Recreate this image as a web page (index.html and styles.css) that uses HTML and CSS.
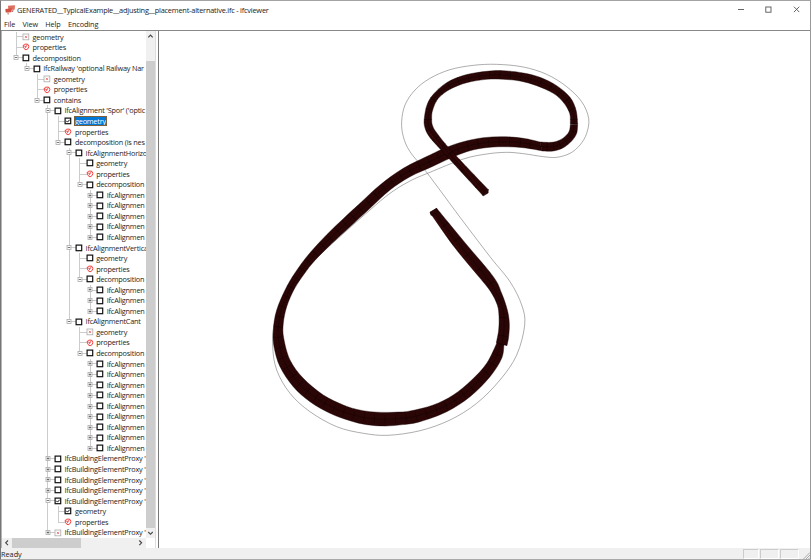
FILE: index.html
```html
<!DOCTYPE html>
<html lang="en">
<head>
<meta charset="utf-8">
<title>ifcviewer</title>
<link rel="stylesheet" href="styles.css">
</head>
<body>
<div class="window">
  <header class="titlebar">
    <svg class="logo" width="12" height="10" viewBox="0 0 12 10"><path d="M3 .8 10 .2 9.6 4.8 3.4 5z" fill="#dc6f60"/><path d="M.3 4 6.8 3.3 6.5 7.2.7 7.5z" fill="#d64f40"/><path d="M3 7.5 3.2 9.5M8 5 7.5 7" stroke="#bd6256"/></svg>
    <span class="title">GENERATED__TypicalExample__adjusting__placement-alternative.ifc - ifcviewer</span>
    <svg class="controls" width="64" height="10" viewBox="0 0 64 10" fill="none" stroke="#555" stroke-width=".9"><path d="M1 4.5h6M56.9 1.7l5.4 5.4M62.3 1.7l-5.4 5.4"/><rect x="28.8" y="2" width="5.2" height="5.2"/></svg>
  </header>
  <nav class="menu"><span>File</span><span>View</span><span>Help</span><span>Encoding</span></nav>
  <main class="content">
    <section class="panel">
      <div class="upper">
        <div class="treebox"><ul class="tree" id="tree"></ul></div>
        <div class="vscroll">
          <svg width="9" height="10" viewBox="0 0 9 10"><path d="M2.3 6.3 4.5 4l2.2 2.3"/></svg>
          <div class="vthumb"></div>
          <svg width="9" height="10" viewBox="0 0 9 10"><path d="M2.3 4 4.5 6.3 6.7 4"/></svg>
        </div>
      </div>
      <div class="hscroll">
        <svg width="10" height="10" viewBox="0 0 10 10"><path d="M6 2.5 3.7 4.8 6 7.1"/></svg>
        <div class="hthumb"></div>
        <svg width="10" height="10" viewBox="0 0 10 10"><path d="M3.3 2.5 5.6 4.8 3.3 7.1"/></svg>
      </div>
    </section>
    <section class="viewport">
      <svg id="scene" width="651" height="517" viewBox="159 31 651 517"></svg>
    </section>
  </main>
  <footer class="status"><span class="ready">Ready</span><i class="pane"></i><i class="pane wide"></i><i class="pane wide"></i>
    <svg class="grip" width="10" height="11" viewBox="0 0 10 11" stroke="#aaa"><path d="M3.5 11 10 4.5M6 11l4-4M8.5 11 10 9.5"/></svg>
  </footer>
</div>
<script src="script.js"></script>
</body>
</html>
```
FILE: styles.css
```css
* { box-sizing: border-box; }
body { margin: 0; font-family: "Open Sans", "Noto Sans", sans-serif; font-size: 7.3px; letter-spacing: -.2px; color: #1c1c1c; overflow: hidden; }
.window { width: 811px; height: 560px; display: flex; flex-direction: column; background: #fff; border-top: 1px solid #a3a3a3; border-left: 1px solid #777; border-right: 1px solid #999; border-bottom: 1px solid #aaa; }
.titlebar { height: 17px; display: flex; align-items: center; padding: 0 9px 0 4px; }
.logo { flex: none; }
.title { white-space: nowrap; font-size: 7.4px; letter-spacing: -.22px; line-height: 12px; }
.controls { margin-left: auto; }
.menu { height: 12px; display: flex; gap: 7.3px; padding-left: 3px; line-height: 12px; letter-spacing: -.1px; }
.content { height: 518px; display: flex; border-top: 1px solid #888; }
.panel { width: 155px; border-left: 1px solid #b5b5b5; border-right: 1px solid #ddd; display: flex; flex-direction: column; }
.upper { height: 507px; display: flex; }
.treebox { width: 144px; overflow: hidden; }
.vscroll { width: 9px; background: #f0f0f0; display: flex; flex-direction: column; }
.vscroll svg, .hscroll svg { flex: none; fill: none; stroke: #444; stroke-width: 1.1; }
.vthumb { margin-top: 20px; height: 467px; background: #cdcdcd; }
.hscroll { height: 10px; width: 144px; background: #f0f0f0; display: flex; }
.hthumb { width: 69px; height: 10px; background: #cdcdcd; }
.hscroll svg:last-child { margin-left: auto; }
.viewport { flex: 1; margin-left: 2px; border-left: 1px solid #777; overflow: hidden; }
#scene { display: block; }
.status { height: 11px; flex: none; display: flex; background: #f0f0f0; line-height: 12px; letter-spacing: 0; }
.ready { flex: 1; }
.pane { width: 16px; margin: 1px 1px 0 0; border: 1px solid #ccc; border-bottom-color: #fff; border-right-color: #fff; }
.pane.wide { width: 19px; }
.grip { fill: none; }

.tree, .tree ul { list-style: none; margin: 0; padding: 0; }
.tree { padding: .6px 0 0 9px; width: 144px; }
.tree ul { padding-left: 10.6px; }
.tree li { position: relative; }
.tree li::before { content: ""; position: absolute; left: 4.6px; top: 0; bottom: 0; border-left: 1px solid #ccc; }
.tree li:last-child::before { bottom: auto; height: 5.3px; }
.row { height: 10.555px; display: flex; align-items: center; position: relative; white-space: nowrap; }
.row::before { content: ""; position: absolute; left: 5px; top: 4.8px; width: 7px; border-top: 1px solid #ccc; }
.row svg { flex: none; position: relative; }
.label { line-height: 10.5px; padding: 0 1px; margin-left: 1.6px; }
.selected { background: #0078d7; color: #fff; outline: 1px solid #7b603c; outline-offset: -1px; }

.track { fill: #2a0606; stroke: #160303; stroke-width: .4; }
.joint { fill: none; stroke: #090000; stroke-width: .5; opacity: .6; }
.shade { fill: none; stroke: #570b0b; stroke-width: .6; }
.axis { fill: none; stroke: #777; stroke-width: .6; }
```
FILE: script.js
```js
// Tree: [label, icon, children | "+"]
const leaf = n => Array.from({ length: n }, () => ["IfcAlignmen", "box", "+"]);
const props = ["properties", "prop"];
const proxy = ["IfcBuildingElementProxy '", "box", "+"];
const data = [
  ["geometry", "none"], props,
  ["decomposition", "box", [
    ["IfcRailway 'optional Railway Nar", "box", [
      ["geometry", "none"], props,
      ["contains", "box", [
        ["IfcAlignment 'Spor' ('optic", "box", [
          ["geometry", "check", null, true], props,
          ["decomposition (is nes", "box", [
            ["IfcAlignmentHorizo", "box", [["geometry", "box"], props, ["decomposition", "box", leaf(5)]]],
            ["IfcAlignmentVertica", "box", [["geometry", "box"], props, ["decomposition", "box", leaf(3)]]],
            ["IfcAlignmentCant", "box", [["geometry", "none"], props, ["decomposition", "box", leaf(9)]]]
          ]]
        ]],
        proxy, proxy, proxy, proxy,
        ["IfcBuildingElementProxy '", "check", [["geometry", "check"], props]],
        ["IfcBuildingElementProxy '", "none", "+"]
      ]]
    ]]
  ]]
];
const box = '<rect x="1.1" y="1.1" width="5.6" height="5.6" fill="#fff" stroke="#111" stroke-width="1.2"/>';
const icons = {
  box,
  check: box + '<path d="M2.3 3.8 3.5 5.1 5.7 2.7" fill="none" stroke="#111" stroke-width="1"/>',
  none: '<rect x="1" y="1" width="5.8" height="5.8" fill="#fff" stroke="#aaa" stroke-width=".8"/><path d="M2.8 2.8 5 5M5 2.8 2.8 5" stroke="#e66" stroke-width=".8"/>',
  prop: '<path d="M1 2.6 2.8 1.2 5.6 1.1 7 3.2 6.1 5.6 4 6.9 2 5.5z" fill="#fff" stroke="#f03030" stroke-width=".9"/><path d="M1.2 2.7 4.2 3.6 5.4 1.4M4.2 3.6 3.2 5.2" fill="none" stroke="#f03030" stroke-width=".8"/>'
};
function build(items) {
  return items.map(([text, icon, kids, sel]) => {
    const exp = kids ? '<rect x="3" y="2.5" width="4" height="4" fill="#fff" stroke="#aaa" stroke-width=".8"/><path d="M3.8 4.5h2.4' + (kids === "+" ? 'M5 3.3v2.4' : '') + '" stroke="#555" stroke-width=".8"/>' : '';
    return '<li><div class="row"><svg width="11" height="9">' + exp + '</svg><svg width="8" height="8">' + icons[icon] +
      '</svg><span class="label' + (sel ? ' selected' : '') + '">' + text + '</span></div>' +
      (Array.isArray(kids) ? '<ul>' + build(kids) + '</ul>' : '') + '</li>';
  }).join("");
}
document.getElementById("tree").innerHTML = build(data);

// Smooth curve through points
function curve(p, start = "M") {
  let d = start + p[0];
  for (let i = 0; i < p.length - 1; i++) {
    const a = p[i - 1] || p[i], b = p[i], c = p[i + 1], e = p[i + 2] || c;
    d += "C" + [b[0] + (c[0] - a[0]) / 6, b[1] + (c[1] - a[1]) / 6, c[0] - (e[0] - b[0]) / 6, c[1] - (e[1] - b[1]) / 6, c[0], c[1]].map(v => v.toFixed(2)).join(" ");
  }
  return d;
}
const third = (pts, ox, oy) => pts.map(([x, y]) => [ox + x / 3, oy + y / 3]);
// Each strip: outer edge and inner edge, listed in the same direction
const strips = [
  [
    [[540,142],[523.3,138.3],[503.3,136.7],[483.3,137.7],[463.3,141.7],[446,147.5],[430,155],[403.3,168.3],[380,185],[360,203.3],[343.3,218.7],[326.7,234.7],[310,252.8],[298,268.5],[286.7,286.7],[276.7,310],[273.3,330],[274,346.7],[280,366.7],[293.3,386.7],[310,401.7],[330,413.3],[350,420.7],[366.7,424.7],[385,426],[403,424.6],[420,421.7],[446.7,411.7],[470,396.7],[490,376.7],[501.7,358.3],[504,344]],
    [[542,150.8],[523.3,147.7],[503.3,146.7],[483.3,148],[466.7,151.7],[450,158.3],[433,166.2],[410,176.7],[390,190],[370,208.3],[350,226.7],[332,243.2],[315,260.3],[304,274.2],[294.3,289],[286.7,306.7],[283.3,323.3],[283.7,338],[290,360],[303.3,378.3],[323.3,395],[343.3,405],[356,409.2],[370,411.7],[385,412.4],[398,412.1],[410,411],[433.3,405],[453.3,395],[471.7,380],[486.7,363.3],[497.3,342]].slice(0, 32)
  ],
  [
    third([[279,422],[160,292],[118,245],[104,215],[103,190],[111,150],[130,118],[170,83],[225,60],[290,49],[340,47],[400,54],[450,67],[500,92],[540,127],[558,165],[563,207]],390,55),
    third([[295,404],[185,288],[142,236],[128,213],[125,192],[128,165],[145,130],[180,103],[230,83],[290,73],[340,73],[390,78],[440,92],[490,115],[520,142],[539,175],[541,207]],390,55)
  ],
  [
    third([[563,208],[560,235],[545,258],[520,278],[490,288],[456,288]],390,55),
    third([[541,209],[538,228],[527,243],[510,255],[485,262],[450,261]],390,55)
  ],
  [
    third([[140,55],[225,158],[310,260],[335,310],[352,360],[358,400],[356,440],[351,467]],390,190),
    third([[120,68],[193,171],[268,262],[302,305],[322,345],[327,380],[326,420],[319,458]],390,190)
  ]
];
const step = [10, 10, 6, 18];
let out = "";
const axis = third([[205,480],[110,352],[60,290],[40,245],[35,200],[45,150],[75,105],[120,70],[180,44],[250,31],[320,28],[400,36],[470,58],[530,95],[575,140],[596,190],[590,235],[570,270],[540,295],[500,307],[460,305],[400,296],[350,292],[290,297],[220,312]],390,55)
  .concat([[430,172.3],[410,181],[390,193.3],[370,210],[345,232],[318,257],[292,286],[276,318],[272.7,345],[276.7,370],[290,393.3],[310,411.7],[336.7,426.7],[363.3,433.3],[388,435.3],[420,430.7],[450,420],[476.7,403.3],[500,380],[516.7,355],[524.7,325],[521.7,305],[510,281.7],[490,256.7],[458.3,215]]);
out += '<path class="axis" d="' + curve(axis) + '"/>';
strips.forEach(([a, b], k) => {
  out += '<path class="track" d="' + curve(a) + curve([...b].reverse(), "L") + 'Z"/>';
  const mid = a.map((p, i) => [(p[0] + b[i][0]) / 2, (p[1] + b[i][1]) / 2]);
  out += '<path class="joint" d="' + curve(mid) + '"/>';
  out += '<path class="joint" style="stroke-width:8px;stroke-dasharray:.5 ' + step[k] + '" d="' + curve(mid) + '"/>';
});
out += '<path class="track" d="M483 195.7 488.3 189.5 488.2 193 483.2 196z"/>';
out += '<path class="track" d="M430 212 436.7 208.3 437.5 212 431 215.5z"/>';
out += '<path class="shade" d="M454 156 480 188.5M434 217 478 275M428 131 442 148"/>';
document.getElementById("scene").innerHTML = out;
```
